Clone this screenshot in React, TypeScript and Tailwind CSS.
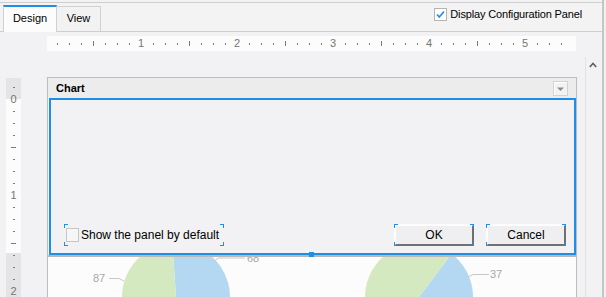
import React from "react";

function Corners() {
  return (
    <>
      <span className="absolute left-0 top-0 h-[4px] w-[1px] bg-[#1f8ee6]" />
      <span className="absolute left-0 top-0 h-[1px] w-[4px] bg-[#1f8ee6]" />
      <span className="absolute right-0 top-0 h-[4px] w-[1px] bg-[#1f8ee6]" />
      <span className="absolute right-0 top-0 h-[1px] w-[4px] bg-[#1f8ee6]" />
      <span className="absolute left-0 bottom-0 h-[4px] w-[1px] bg-[#1f8ee6]" />
      <span className="absolute left-0 bottom-0 h-[1px] w-[4px] bg-[#1f8ee6]" />
      <span className="absolute right-0 bottom-0 h-[4px] w-[1px] bg-[#1f8ee6]" />
      <span className="absolute right-0 bottom-0 h-[1px] w-[4px] bg-[#1f8ee6]" />
    </>
  );
}

function sector(cx: number, cy: number, r: number, a0: number, a1: number) {
  const rad = (a: number) => (a * Math.PI) / 180;
  const x0 = cx + r * Math.sin(rad(a0));
  const y0 = cy - r * Math.cos(rad(a0));
  const x1 = cx + r * Math.sin(rad(a1));
  const y1 = cy - r * Math.cos(rad(a1));
  const large = a1 - a0 > 180 ? 1 : 0;
  return `M${cx} ${cy} L${x0} ${y0} A${r} ${r} 0 ${large} 1 ${x1} ${y1} Z`;
}

function HRuler() {
  const cells = Array.from({ length: 44 }, (_, i) => i);
  return (
    <div className="ml-[47px] mt-[4px] h-[15px] w-[529px] shrink-0 overflow-hidden bg-[#fbfcfb]">
      <div className="-ml-[8px] flex h-full">
        {cells.map((k) => (
          <div key={k} className="flex h-full w-[12px] shrink-0 items-center justify-center">
            {k === 0 ? null : k % 8 === 0 ? (
              <span className="text-[11px] leading-none text-[#767676]">{k / 8}</span>
            ) : k % 4 === 0 ? (
              <span className="h-[5px] w-[1px] bg-[#7a7a7a]" />
            ) : (
              <span className="h-[2px] w-[1px] bg-[#7a7a7a]" />
            )}
          </div>
        ))}
      </div>
    </div>
  );
}

function VRuler() {
  const cells = Array.from({ length: 18 }, (_, i) => i - 1);
  return (
    <div className="ml-[6px] mt-[1px] h-[230px] w-[15px] shrink-0 bg-[linear-gradient(to_bottom,#e4e3e6_21px,#fbfcfb_21px,#fbfcfb_175px,#e4e3e6_175px)] pt-[3px]">
      {cells.map((k) => (
        <div key={k} className="flex h-[12px] w-full items-center justify-center">
          {k % 8 === 0 ? (
            <span className="text-[11px] leading-none text-[#767676]">{k / 8}</span>
          ) : k % 4 === 0 ? (
            <span className="h-[1px] w-[5px] bg-[#7a7a7a]" />
          ) : (
            <span className="h-[1px] w-[2px] bg-[#7a7a7a]" />
          )}
        </div>
      ))}
    </div>
  );
}

function Btn({ label }: { label: string }) {
  return (
    <div className="relative h-[22px] w-[80px]">
      <div className="flex h-full w-full items-center justify-center border-2 border-t-[#fdfdfd] border-l-[#fdfdfd] border-r-[#707070] border-b-[#707070] bg-[#efeff1] text-[12px] text-black">
        {label}
      </div>
      <Corners />
    </div>
  );
}

function Pies() {
  return (
    <svg width="528" height="41" viewBox="0 0 528 41" className="block">
      <path d={sector(128, 40, 54, -4, 154)} fill="#b5d8f2" />
      <path d={sector(128, 40, 54, 154, 356)} fill="#d5e9c0" />
      <path d={sector(371, 40, 54, 37, 160)} fill="#b5d8f2" />
      <path d={sector(371, 40, 54, 160, 397)} fill="#d5e9c0" />
      <polyline points="61,21.5 71,21.5 76,24" fill="none" stroke="#c8c8c8" strokeWidth="1" />
      <polyline points="166,5 170,1 197,1" fill="none" stroke="#c8c8c8" strokeWidth="1" />
      <polyline points="420,20 425,17.5 441,17.5" fill="none" stroke="#c8c8c8" strokeWidth="1" />
      <text x="45" y="25" fontSize="11" fill="#a8a8a8" fontFamily="Liberation Sans, Arial, sans-serif">87</text>
      <text x="199" y="5" fontSize="11" fill="#a8a8a8" fontFamily="Liberation Sans, Arial, sans-serif">68</text>
      <text x="442" y="21" fontSize="11" fill="#a8a8a8" fontFamily="Liberation Sans, Arial, sans-serif">37</text>
    </svg>
  );
}

export default function App() {
  return (
    <div className="flex h-[297px] w-[606px] overflow-hidden bg-[#f2f1f4] font-['Liberation_Sans',Arial,sans-serif] text-black">
      <div className="flex h-full w-[602px] shrink-0 flex-col">
        <div className="h-[2px] shrink-0" />
        {/* Tab strip */}
        <div className="flex h-[30px] shrink-0 items-end border-t border-b border-[#cfcfcf] bg-[#f3f3f3]">
          <div className="relative z-10 -mb-[1px] ml-[3px] flex h-[27px] w-[54px] items-center justify-center border-x border-t-2 border-x-[#d0d0d0] border-t-[#1f8ee6] bg-[#fbfcfb] pb-[2px] text-[11px]">
            Design
          </div>
          <div className="flex h-[25px] w-[44px] items-center justify-center border-r border-t border-[#d0d0d0] bg-[#f2f2f2] pb-[1px] text-[11px]">
            View
          </div>
          <div className="mr-[20px] ml-auto mt-[5px] flex items-center self-start">
            <span className="flex h-[13px] w-[13px] items-center justify-center border border-[#b4b4b4] bg-white">
              <svg width="11" height="11" viewBox="0 0 11 11">
                <path d="M2 5.5 L4.3 8 L9 2.5" fill="none" stroke="#2d8ce0" strokeWidth="1.7" />
              </svg>
            </span>
            <span className="ml-[3px] text-[11px] leading-[13px] tracking-[-0.15px]">Display Configuration Panel</span>
          </div>
        </div>
        {/* Body */}
        <div className="flex min-h-0 flex-1 overflow-hidden">
          <div className="flex w-[585px] shrink-0 flex-col">
            <HRuler />
            <div className="mt-[26px] flex shrink-0 items-start">
              <VRuler />
              <div className="ml-[26px] flex h-[230px] w-[530px] shrink-0 flex-col border border-b-0 border-[#bdbdbd]">
                <div className="flex h-[20px] shrink-0 items-center bg-[#ebeceb] pl-[8px] pr-[8px]">
                  <span className="text-[11px] font-bold leading-none">Chart</span>
                  <span className="ml-auto flex h-[15px] w-[15px] border border-[#d2d2d2] bg-[#f3f3f3] shadow-[inset_1px_1px_0_#ffffff]">
                    <svg width="13" height="13" viewBox="0 0 13 13">
                      <path d="M3 5.5 L10 5.5 L6.5 9 Z" fill="#8c8c8c" />
                    </svg>
                  </span>
                </div>
                <div className="relative ml-[1px] flex h-[157px] w-[527px] shrink-0 items-end justify-between border-2 border-[#1f8ee6] pb-[7px] pl-[13px] pr-[8px]">
                  <div className="relative flex h-[22px] w-[160px] items-center">
                    <span className="ml-[2px] h-[14px] w-[13px] border border-[#c6c6c6] bg-[#f6f6f6]" />
                    <span className="ml-[2px] text-[12px] leading-none">Show the panel by default</span>
                    <Corners />
                  </div>
                  <div className="flex gap-[12px]">
                    <Btn label="OK" />
                    <Btn label="Cancel" />
                  </div>
                  <span className="absolute bottom-[-4px] left-[258px] h-[5px] w-[5px] bg-[#1f8ee6]" />
                </div>
                <div className="h-[2px] shrink-0 bg-[#b8b8b8]" />
                <div className="flex-1 bg-[#fbfcfb]">
                  <Pies />
                </div>
              </div>
            </div>
          </div>
          <div className="mt-[25px] w-[17px] shrink-0 border-l border-[#e2e2e2] pl-[3px] pt-[5px]">
            <svg width="8" height="6" viewBox="0 0 8 6">
              <path d="M0.8 5 L4 1.5 L7.2 5" fill="none" stroke="#5e5e5e" strokeWidth="1.6" />
            </svg>
          </div>
        </div>
      </div>
      <div className="w-[2px] shrink-0 bg-[#c6c6c6]" />
      <div className="w-[2px] shrink-0 bg-[#f0f0f0]" />
    </div>
  );
}
